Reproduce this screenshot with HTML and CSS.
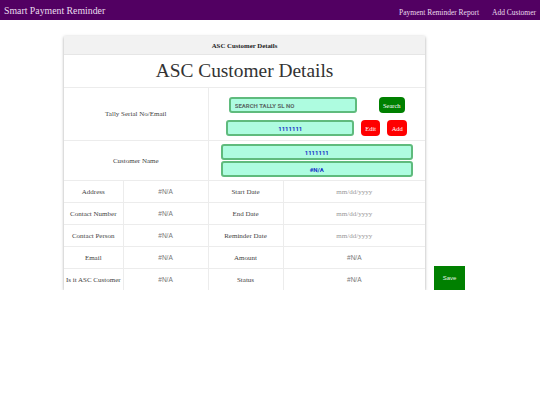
FILE: index.html
```html
<!DOCTYPE html>
<html lang="en">
<head>
    <meta charset="UTF-8">
    <title>Smart Payment Reminder</title>
    <link rel="stylesheet" href="styles.css">
</head>
<body>
    <nav class="navbar">
        <div class="brand">Smart Payment Reminder</div>
        <div class="nav-links">
            <a href="#">Payment Reminder Report</a>
            <a href="#">Add Customer</a>
        </div>
    </nav>

    <div class="main">
        <!-- customer details card -->
        <div class="card">
            <div class="card-header">ASC Customer Details</div>
            <table class="details">
                <colgroup>
                    <col class="c1"><col class="c2"><col class="c3"><col class="c4">
                </colgroup>
                <tr>
                    <td colspan="4" class="title">ASC Customer Details</td>
                </tr>
                <tr class="tally-row">
                    <td colspan="2" class="label">Tally Serial No/Email</td>
                    <td colspan="2" class="inputs">
                        <div class="line">
                            <input type="text" class="field search-field" placeholder="SEARCH TALLY SL NO">
                            <button class="btn green search-btn">Search</button>
                        </div>
                        <div class="line">
                            <input type="text" class="field value-field" value="1111111">
                            <button class="btn red">Edit</button>
                            <button class="btn red">Add</button>
                        </div>
                    </td>
                </tr>
                <tr class="name-row">
                    <td colspan="2" class="label">Customer Name</td>
                    <td colspan="2" class="inputs">
                        <input type="text" class="field wide" value="1111111">
                        <input type="text" class="field wide" value="#N/A">
                    </td>
                </tr>
                <tr class="row">
                    <td class="label">Address</td>
                    <td class="value">#N/A</td>
                    <td class="label">Start Date</td>
                    <td class="date">mm/dd/yyyy</td>
                </tr>
                <tr class="row">
                    <td class="label">Contact Number</td>
                    <td class="value">#N/A</td>
                    <td class="label">End Date</td>
                    <td class="date">mm/dd/yyyy</td>
                </tr>
                <tr class="row">
                    <td class="label">Contact Person</td>
                    <td class="value">#N/A</td>
                    <td class="label">Reminder Date</td>
                    <td class="date">mm/dd/yyyy</td>
                </tr>
                <tr class="row">
                    <td class="label">Email</td>
                    <td class="value">#N/A</td>
                    <td class="label">Amount</td>
                    <td class="value">#N/A</td>
                </tr>
                <tr class="row">
                    <td class="label">Is it ASC Customer</td>
                    <td class="value">#N/A</td>
                    <td class="label">Status</td>
                    <td class="value">#N/A</td>
                </tr>
            </table>
        </div>

        <button class="save-btn">Save</button>
    </div>
</body>
</html>
```

FILE: styles.css
```css
body {
    margin: 0;
    padding: 0;
    font-family: "Liberation Serif", "Times New Roman", serif;
    color: #333;
    background: white;
}
.navbar {
    display: flex;
    justify-content: space-between;
    align-items: center;
    height: 20px;
    padding: 0 4px;
    background: #520062;
}
.brand {
    color: #eadcee;
    font-size: 9.8px;
}
.nav-links a {
    color: #eadcee;
    font-size: 7.5px;
    text-decoration: none;
    margin-left: 9px;
}
.main {
    display: flex;
    align-items: flex-start;
    padding: 16px 0 0 64px;
}
.card {
    width: 361px;
    background: white;
    box-shadow: 0 1px 3px rgba(0, 0, 0, 0.35);
}
.card-header {
    height: 19px;
    line-height: 19px;
    text-align: center;
    font-size: 6.8px;
    font-weight: bold;
    color: #222;
    background: #f2f2f2;
    border-bottom: 1px solid #e6e6e6;
    box-sizing: border-box;
}
.details {
    width: 100%;
    border-collapse: collapse;
    table-layout: fixed;
}
.c1 { width: 59px; }
.c2 { width: 85px; }
.c3 { width: 75px; }
.details td {
    border: 1px solid #ececec;
    text-align: center;
    font-size: 7px;
    color: #444;
    padding: 0;
}
.details tr:first-child td { border-top: none; }
.details tr:last-child td { border-bottom: none; }
.details td:first-child { border-left: none; }
.details td:last-child { border-right: none; }
.details td.title {
    height: 32px;
    font-size: 19.4px;
    color: #333;
}
.details td.inputs {
    vertical-align: top;
}
.tally-row td {
    height: 52px;
}
.tally-row td.inputs {
    height: 43px;
    padding-top: 9px;
}
.line {
    display: flex;
    justify-content: center;
    align-items: center;
}
.line + .line {
    margin-top: 7px;
}
.name-row td {
    height: 39px;
}
.name-row td.inputs {
    height: 36px;
    padding-top: 3px;
}
.field {
    box-sizing: border-box;
    height: 16px;
    background: #aefce0;
    border: 2px solid #5fbb7d;
    border-radius: 3px;
    font-family: Roboto, "Liberation Sans", sans-serif;
    font-weight: bold;
    font-size: 6px;
    color: #1530c8;
    text-align: center;
    padding: 0 4px;
    outline: none;
}
.search-field {
    width: 128px;
    text-align: left;
    margin-right: 22px;
}
.search-field::placeholder {
    color: #5a6a66;
}
.value-field {
    width: 128px;
    margin-right: 7px;
}
.wide {
    display: block;
    width: 192px;
    margin: 0 auto 1px auto;
}
.btn {
    height: 16px;
    border: none;
    border-radius: 4px;
    color: white;
    font-family: "Liberation Serif", serif;
    font-size: 6.5px;
    padding: 0;
    cursor: pointer;
}
.green {
    background: #008000;
    width: 26px;
}
.red {
    background: #ff0000;
    width: 19px;
}
.red + .red {
    width: 20px;
    margin-left: 7px;
}
.row td {
    height: 21px;
}
.details td.value {
    color: #777;
    font-family: "Liberation Sans", Arial, sans-serif;
    font-size: 6.5px;
}
.details td.date {
    color: #999;
}
.save-btn {
    margin: 230px 0 0 9px;
    width: 31px;
    height: 24px;
    background: #008000;
    color: #e6f2e6;
    border: none;
    font-family: "Liberation Sans", sans-serif;
    font-size: 6px;
    cursor: pointer;
}
```
